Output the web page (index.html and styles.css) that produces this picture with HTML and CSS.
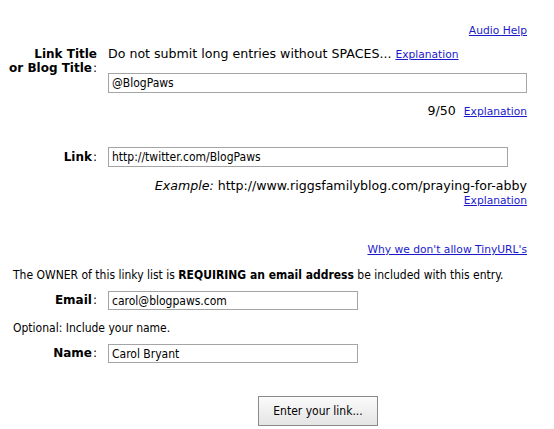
FILE: index.html
```html
<!DOCTYPE html>
<html>
  <head>
    <title>Enter your link</title>
    <link rel="stylesheet" href="styles.css">
  </head>
  <body>
    <form class="linky-form">
      <div class="align-right help-row">
        <a href="#" class="small-link">Audio Help</a>
      </div>

      <div class="field title-field">
        <label class="field-label">Link Title<br />or Blog Title<span class="colon">:</span></label>
        <div class="field-body">
          <div class="hint">
            Do not submit long entries without SPACES...
            <a href="#" class="small-link">Explanation</a>
          </div>
          <input class="text-input title-input" type="text" value="@BlogPaws" />
          <div class="align-right counter">
            9/50&nbsp; <a href="#" class="small-link">Explanation</a>
          </div>
        </div>
      </div>

      <div class="field link-field">
        <label class="field-label">Link<span class="colon">:</span></label>
        <div class="field-body">
          <input class="text-input link-input" type="text" value="http://twitter.com/BlogPaws" />
          <div class="align-right example">
            <em>Example:</em> http://www.riggsfamilyblog.com/praying-for-abby
          </div>
          <div class="align-right">
            <a href="#" class="small-link">Explanation</a>
          </div>
        </div>
      </div>

      <div class="align-right tiny-row">
        <a href="#" class="small-link">Why we don't allow TinyURL's</a>
      </div>

      <div class="note owner-note">
        The OWNER of this linky list is <b>REQUIRING an email address</b> be included with this entry.
      </div>

      <div class="field email-field">
        <label class="field-label">Email<span class="colon">:</span></label>
        <div class="field-body">
          <input class="text-input short-input" type="text" value="carol@blogpaws.com" />
        </div>
      </div>

      <div class="note optional-note">Optional: Include your name.</div>

      <div class="field name-field">
        <label class="field-label">Name<span class="colon">:</span></label>
        <div class="field-body">
          <input class="text-input short-input" type="text" value="Carol Bryant" />
        </div>
      </div>

      <div class="submit-row">
        <button type="button" class="submit-btn">Enter your link...</button>
      </div>
    </form>
  </body>
</html>
```

FILE: styles.css
```css
body {
  margin: 0;
  padding: 0;
  background-color: #fff;
  color: #000;
  font-family: "DejaVu Sans", Verdana, sans-serif;
  font-size: 12.6px;
  line-height: 14px;
}
.linky-form {
  width: 520px;
  padding: 23px 0 0 7px;
}
.align-right {
  text-align: right;
}
.small-link {
  font-size: 10.7px;
  color: #1a1acc;
}
.help-row {
  line-height: 13px;
}
.field {
  display: grid;
  grid-template-columns: 90px 1fr;
  column-gap: 11px;
}
.field-label {
  text-align: right;
  white-space: nowrap;
  font-weight: bold;
  font-size: 12px;
}
.colon {
  font-weight: normal;
  margin-left: 1px;
}
.title-field {
  margin-top: 10px;
}
.text-input {
  display: block;
  box-sizing: border-box;
  height: 20px;
  margin: 0;
  padding: 1px 3px;
  border: 1px solid #a5a5a5;
  font-family: "DejaVu Sans Condensed", Tahoma, sans-serif;
  font-size: 12px;
  color: #000;
}
.title-input {
  width: 419px;
  margin-top: 11px;
}
.counter {
  margin-top: 11px;
}
.link-field {
  margin-top: 28px;
}
.link-field .field-label {
  padding-top: 3px;
}
.link-input {
  width: 400px;
}
.example {
  margin-top: 12px;
}
.tiny-row {
  margin-top: 34px;
}
.note {
  margin-left: 6px;
  font-family: "DejaVu Sans Condensed", Tahoma, sans-serif;
  font-size: 12px;
}
.owner-note {
  margin-top: 11px;
}
.email-field {
  margin-top: 9px;
}
.email-field .field-label,
.name-field .field-label {
  padding-top: 2px;
}
.short-input {
  width: 250px;
  height: 19px;
}
.optional-note {
  margin-top: 11px;
}
.name-field {
  margin-top: 9px;
}
.submit-row {
  margin-top: 33px;
  padding-left: 251px;
}
.submit-btn {
  width: 120px;
  height: 30px;
  border: 1px solid #8a8a8a;
  background: linear-gradient(#fbfbfb, #e4e4e4);
  font-family: "DejaVu Sans Condensed", Tahoma, sans-serif;
  font-size: 12px;
  color: #000;
}
```
